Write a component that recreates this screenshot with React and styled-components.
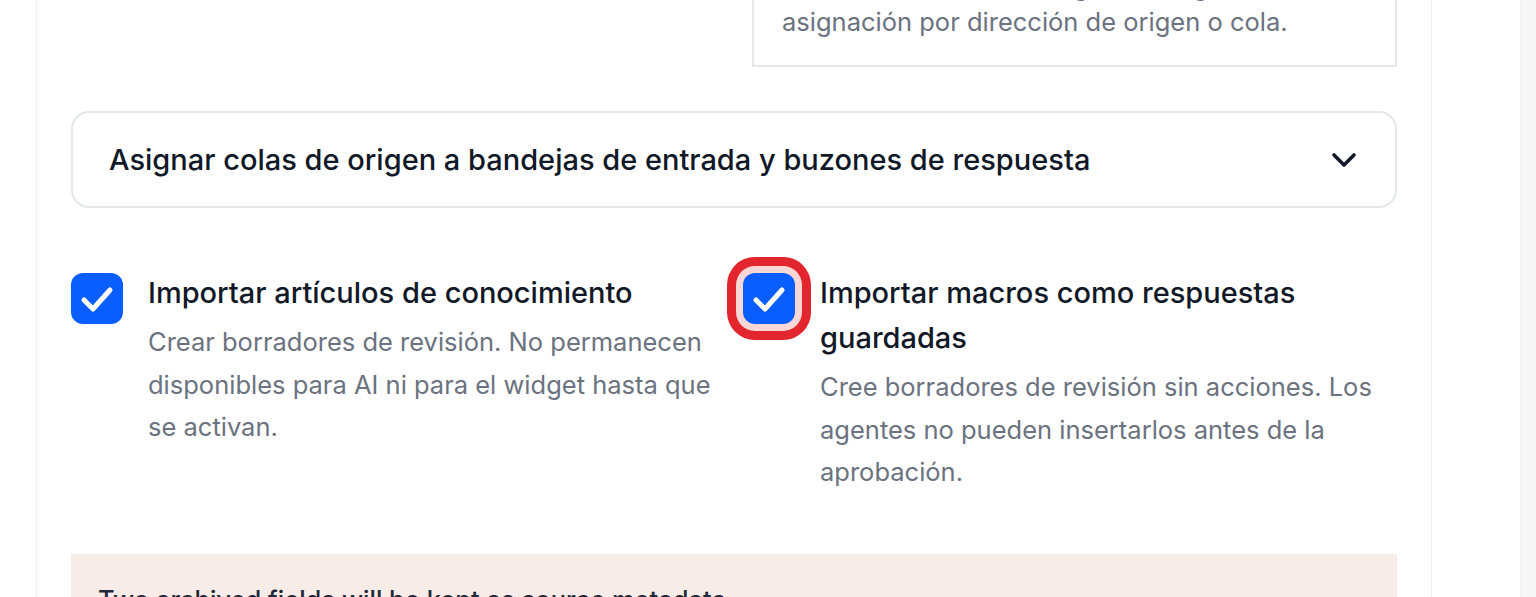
import styled, { createGlobalStyle } from 'styled-components';

const GlobalStyle = createGlobalStyle`
  html, body {
    margin: 0;
    padding: 0;
    background: #ffffff;
    font-family: Inter, "Noto Sans", "Liberation Sans", sans-serif;
    -webkit-font-smoothing: antialiased;
  }
  * {
    box-sizing: border-box;
  }
`;

const Viewport = styled.div`
  display: flex;
  height: 100vh;
  overflow: hidden;
`;

const Main = styled.div`
  flex: 1;
  padding-left: 36px;
  overflow: hidden;
`;

const ScrollBar = styled.div`
  width: 16px;
  background: #f6f6f7;
  border-left: 1px solid #f1f1f3;
`;

// the page is scrolled down: the top of the card is above the window
const ScrollContent = styled.div`
  margin-top: -93px;
`;

const Card = styled.section`
  width: 1396px;
  background: #ffffff;
  border: 1px solid #eeeff1;
  border-top: none;
  padding: 35px 34px 60px 34px;
`;

const TopGrid = styled.div`
  display: grid;
  grid-template-columns: 1fr 1fr;
  gap: 36px;
`;

const InfoBox = styled.div`
  border: 2px solid #e5e7eb;
  padding: 24px 28px 25px 28px;
  font-size: 25.5px;
  line-height: 36px;
  color: #6b7280;
`;

const Accordion = styled.button`
  margin-top: 44px;
  width: 100%;
  height: 97px;
  display: flex;
  align-items: center;
  justify-content: space-between;
  padding: 0 38px 0 36px;
  background: #ffffff;
  border: 2px solid #e5e7eb;
  border-radius: 18px;
  font-family: inherit;
  font-size: 29px;
  font-weight: 500;
  color: #111827;
  cursor: pointer;
  text-align: left;
`;

const OptionGrid = styled.div`
  margin-top: 62px;
  display: grid;
  grid-template-columns: 1fr 1fr;
  gap: 18px;
`;

const Option = styled.label`
  display: flex;
  align-items: flex-start;
  gap: 25px;
`;

const Box = styled.span`
  flex: none;
  width: 52px;
  height: 51px;
  margin-top: 3px;
  border-radius: 12px;
  background: #0a5dff;
  display: flex;
  align-items: center;
  justify-content: center;
  box-shadow: ${(p) =>
    p.$focused ? '0 0 0 7px #fbd6d6, 0 0 0 16px #e3262d' : 'none'};
`;

const OptionText = styled.div`
  display: flex;
  flex-direction: column;
`;

const OptionTitle = styled.span`
  font-size: 29px;
  line-height: 45px;
  font-weight: 500;
  color: #111827;
`;

const OptionDesc = styled.span`
  margin-top: 6px;
  font-size: 25.5px;
  line-height: 42.5px;
  color: #6b7280;
`;

const Notice = styled.div`
  margin-top: 60px;
  background: #f8ece8;
  padding: 28px 27px 24px 27px;
  font-size: 25.5px;
  line-height: 36px;
  font-weight: 500;
  color: #1f2937;
`;

const Check = () => (
  <svg width="52" height="51" viewBox="0 0 52 51" fill="none">
    <polyline
      points="13,27 22,36 39,17"
      stroke="#ffffff"
      strokeWidth="5"
      strokeLinecap="round"
      strokeLinejoin="round"
    />
  </svg>
);

const Chevron = () => (
  <svg width="26" height="16" viewBox="0 0 26 16" fill="none">
    <polyline
      points="3,3 13,13 23,3"
      stroke="#111827"
      strokeWidth="3.6"
      strokeLinecap="round"
      strokeLinejoin="round"
    />
  </svg>
);

const options = [
  {
    title: 'Importar artículos de conocimiento',
    desc: 'Crear borradores de revisión. No permanecen disponibles para AI ni para el widget hasta que se activan.',
  },
  {
    title: 'Importar macros como respuestas guardadas',
    desc: 'Cree borradores de revisión sin acciones. Los agentes no pueden insertarlos antes de la aprobación.',
    focused: true,
  },
];

const App = () => {
  return (
    <>
      <GlobalStyle />
      <Viewport>
        <Main>
          <ScrollContent>
            <Card>
              <TopGrid>
                <div />
                <InfoBox>
                  Los correos entrantes siguen la regla de
                  asignación por dirección de origen o cola.
                </InfoBox>
              </TopGrid>

              <Accordion type="button">
                <span>Asignar colas de origen a bandejas de entrada y buzones de respuesta</span>
                <Chevron />
              </Accordion>

              <OptionGrid>
                {options.map((o) => (
                  <Option key={o.title}>
                    <Box $focused={o.focused}>
                      <Check />
                    </Box>
                    <OptionText>
                      <OptionTitle>{o.title}</OptionTitle>
                      <OptionDesc>{o.desc}</OptionDesc>
                    </OptionText>
                  </Option>
                ))}
              </OptionGrid>

              <Notice>Two archived fields will be kept as source metadata.</Notice>
            </Card>
          </ScrollContent>
        </Main>
        <ScrollBar />
      </Viewport>
    </>
  );
};

export default App;
